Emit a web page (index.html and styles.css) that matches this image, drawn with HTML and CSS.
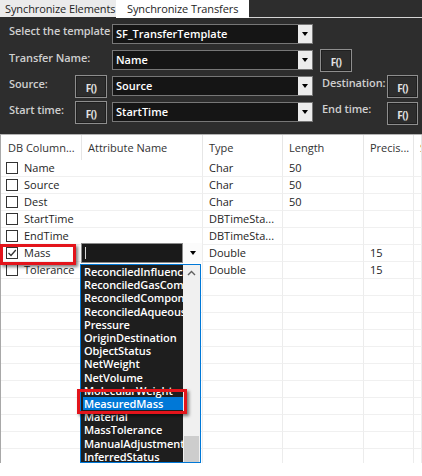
FILE: index.html
```html
<!DOCTYPE html>
<html>
<head>
<meta charset="utf-8">
<link rel="stylesheet" href="styles.css">
</head>
<body>
<div class="app">
  <div class="tabs">
    <div class="tab tab-inactive">Synchronize Elements</div>
    <div class="tab tab-active">Synchronize Transfers</div>
    <div class="tab-fill"></div>
  </div>

  <div class="panel">
    <div class="lbl span2">Select the template</div>
    <div class="combo"><span class="combo-text">SF_TransferTemplate</span><span class="combo-btn"><i class="tri"></i></span></div>
    <div class="blank"></div><div class="blank"></div>

    <div class="lbl span2">Transfer Name:</div>
    <div class="combo"><span class="combo-text">Name</span><span class="combo-btn"><i class="tri"></i></span></div>
    <div class="fbtn">F()</div>
    <div class="blank"></div>

    <div class="lbl">Source:</div>
    <div class="fbtn">F()</div>
    <div class="combo"><span class="combo-text">Source</span><span class="combo-btn"><i class="tri"></i></span></div>
    <div class="lbl lbl-right">Destination:</div>
    <div class="fbtn fbtn-end">F()</div>

    <div class="lbl">Start time:</div>
    <div class="fbtn">F()</div>
    <div class="combo"><span class="combo-text">StartTime</span><span class="combo-btn"><i class="tri"></i></span></div>
    <div class="lbl lbl-right">End time:</div>
    <div class="fbtn fbtn-end fbtn-low">F()</div>
  </div>

  <div class="grid">
    <div class="hdr">
      <div class="hcell">DB Column...</div>
      <div class="hcell">Attribute Name</div>
      <div class="hcell">Type</div>
      <div class="hcell">Length</div>
      <div class="hcell">Precis...</div>
      <div class="hcell">Scale</div>
    </div>
    <div class="row"><div class="cell first"><span class="cb"></span><span class="nm">Name</span></div><div class="cell"></div><div class="cell">Char</div><div class="cell">50</div><div class="cell"></div><div class="cell"></div></div>
    <div class="row"><div class="cell first"><span class="cb"></span><span class="nm">Source</span></div><div class="cell"></div><div class="cell">Char</div><div class="cell">50</div><div class="cell"></div><div class="cell"></div></div>
    <div class="row"><div class="cell first"><span class="cb"></span><span class="nm">Dest</span></div><div class="cell"></div><div class="cell">Char</div><div class="cell">50</div><div class="cell"></div><div class="cell"></div></div>
    <div class="row"><div class="cell first"><span class="cb"></span><span class="nm">StartTime</span></div><div class="cell"></div><div class="cell">DBTimeSta...</div><div class="cell"></div><div class="cell"></div><div class="cell"></div></div>
    <div class="row"><div class="cell first"><span class="cb"></span><span class="nm">EndTime</span></div><div class="cell"></div><div class="cell">DBTimeSta...</div><div class="cell"></div><div class="cell"></div><div class="cell"></div></div>
    <div class="row"><div class="cell first"><span class="cb checked"><svg width="10" height="10" viewBox="0 0 10 10"><polyline points="1.5,5 4,7.5 8.8,2" fill="none" stroke="#333" stroke-width="1.3"/></svg></span><span class="nm">Mass</span></div>
      <div class="cell editor-cell">
        <div class="edit-combo"><span class="edit-text"><i class="caret"></i></span><span class="edit-btn"><i class="tri"></i></span></div>
      </div>
      <div class="cell">Double</div><div class="cell"></div><div class="cell">15</div><div class="cell"></div></div>
    <div class="row"><div class="cell first"><span class="cb"></span><span class="nm">Tolerance</span></div><div class="cell"></div><div class="cell">Double</div><div class="cell"></div><div class="cell">15</div><div class="cell"></div></div>
    <div class="row"><div class="cell first"></div><div class="cell"></div><div class="cell"></div><div class="cell"></div><div class="cell"></div><div class="cell"></div></div>
    <div class="row"><div class="cell first"></div><div class="cell"></div><div class="cell"></div><div class="cell"></div><div class="cell"></div><div class="cell"></div></div>
    <div class="row"><div class="cell first"></div><div class="cell"></div><div class="cell"></div><div class="cell"></div><div class="cell"></div><div class="cell"></div></div>
    <div class="row"><div class="cell first"></div><div class="cell"></div><div class="cell"></div><div class="cell"></div><div class="cell"></div><div class="cell"></div></div>
    <div class="row"><div class="cell first"></div><div class="cell"></div><div class="cell"></div><div class="cell"></div><div class="cell"></div><div class="cell"></div></div>
    <div class="row"><div class="cell first"></div><div class="cell"></div><div class="cell"></div><div class="cell"></div><div class="cell"></div><div class="cell"></div></div>
    <div class="row"><div class="cell first"></div><div class="cell"></div><div class="cell"></div><div class="cell"></div><div class="cell"></div><div class="cell"></div></div>
    <div class="row"><div class="cell first"></div><div class="cell"></div><div class="cell"></div><div class="cell"></div><div class="cell"></div><div class="cell"></div></div>
    <div class="row"><div class="cell first"></div><div class="cell"></div><div class="cell"></div><div class="cell"></div><div class="cell"></div><div class="cell"></div></div>
    <div class="row"><div class="cell first"></div><div class="cell"></div><div class="cell"></div><div class="cell"></div><div class="cell"></div><div class="cell"></div></div>
    <div class="row"><div class="cell first"></div><div class="cell"></div><div class="cell"></div><div class="cell"></div><div class="cell"></div><div class="cell"></div></div>
  </div>

  <div class="dropdown">
    <div class="dd-items">
      <div class="dd-item">ReconciledInfluence</div>
      <div class="dd-item">ReconciledGasComponent</div>
      <div class="dd-item">ReconciledComponent</div>
      <div class="dd-item">ReconciledAqueousComponent</div>
      <div class="dd-item">Pressure</div>
      <div class="dd-item">OriginDestination</div>
      <div class="dd-item">ObjectStatus</div>
      <div class="dd-item">NetWeight</div>
      <div class="dd-item">NetVolume</div>
      <div class="dd-item">MolecularWeight</div>
      <div class="dd-item sel">MeasuredMass</div>
      <div class="dd-item">Material</div>
      <div class="dd-item">MassTolerance</div>
      <div class="dd-item">ManualAdjustment</div>
      <div class="dd-item">InferredStatus</div>
    </div>
    <div class="dd-scroll">
      <div class="dd-up"><svg width="9" height="6" viewBox="0 0 9 6"><polyline points="1,5 4.5,1.5 8,5" fill="none" stroke="#606060" stroke-width="1.4"/></svg></div>
      <div class="dd-thumb"></div>
    </div>
  </div>

  <div class="mark mark-mass"></div>
  <div class="mark mark-item"></div>
</div>
</body>
</html>
```

FILE: styles.css
```css
* { box-sizing: border-box; margin: 0; padding: 0; }
html, body { width: 422px; height: 476px; overflow: hidden; background: #fff; }
body {
  font-family: "Open Sans", "Noto Sans", "DejaVu Sans", sans-serif;
  font-size: 11px;
  color: #1e1e1e;
}
.app { position: relative; width: 422px; height: 476px; }

/* tabs */
.tabs { display: flex; height: 18px; background: #2d2d2d; }
.tab { height: 17px; line-height: 17px; white-space: nowrap; font-size: 11px; letter-spacing: -0.1px; }
.tab-inactive { width: 116px; padding-left: 5px; background: #ebebeb; color: #1e1e1e; }
.tab-active { width: 133px; height: 18px; padding-left: 11px; background: #fff; color: #1e1e1e; }
.tab-fill { flex: 1; height: 18px; border-bottom: 1px solid #d4d4d4; }

/* top panel */
.panel {
  height: 116px;
  background: #2d2d2d;
  padding: 2px 0 0 9px;
  display: grid;
  grid-template-columns: 66px 37px 208px 67px 31px;
  grid-template-rows: 27px 26px 26px 26px;
  align-items: center;
}
.lbl {
  align-self: start;
  margin-top: 3px;
  line-height: 15px;
  color: #cfcfcf;
  font-weight: 600;
  white-space: nowrap;
  letter-spacing: -0.1px;
}
.lbl-right { padding-left: 2px; margin-top: 2px; }
.span2 { grid-column: 1 / 3; }
.combo {
  width: 201px;
  height: 20px;
  display: flex;
  border: 1px solid #777;
  background: #151515;
}
.combo-text {
  flex: 1;
  padding-left: 3px;
  line-height: 18px;
  color: #fff;
  font-weight: 600;
  white-space: nowrap;
  overflow: hidden;
}
.combo-btn {
  width: 14px;
  background: #ececec;
  display: flex;
  align-items: center;
  justify-content: center;
}
.tri {
  display: block;
  width: 0;
  height: 0;
  border-left: 3.5px solid transparent;
  border-right: 3.5px solid transparent;
  border-top: 4px solid #000;
}
.fbtn {
  width: 32px;
  height: 23px;
  border: 1px solid #8e8e8e;
  box-shadow: inset 0 0 0 1px #1f1f1f;
  color: #e4e4e4;
  font-weight: 700;
  font-size: 10px;
  text-align: center;
  padding-top: 5px;
  letter-spacing: -0.6px;
}
.fbtn-end { width: 31px; }
.fbtn-low { margin-top: 3px; }

/* data grid */
.grid {
  height: 329px;
  overflow: hidden;
  border-top: 1px solid #b3b3b3;
  border-left: 1px solid #a8a8a8;
}
.hdr, .row {
  display: grid;
  grid-template-columns: 81px 121px 80px 81px 50px 1fr;
}
.hcell {
  height: 25px;
  line-height: 25px;
  padding-left: 6px;
  border-right: 1px solid #e6e6e6;
  color: #333;
  white-space: nowrap;
  overflow: hidden;
}
.hcell:first-child { padding-left: 7px; }
.cell {
  height: 17px;
  line-height: 16px;
  padding-left: 6px;
  border-bottom: 1px solid #f0f0f0;
  border-right: 1px solid #ececec;
  white-space: nowrap;
  overflow: hidden;
  color: #1e1e1e;
}
.cell.first { border-right: none; padding-left: 5px; display: flex; align-items: center; }
.cb {
  width: 12px;
  height: 12px;
  border: 1px solid #333;
  background: #fff;
  display: flex;
  align-items: center;
  justify-content: center;
  flex: none;
}
.nm { margin-left: 6px; }
.editor-cell { position: relative; overflow: visible; }
.edit-combo {
  position: absolute;
  left: -1px;
  top: -2px;
  width: 121px;
  height: 20px;
  display: flex;
  z-index: 2;
}
.edit-text {
  flex: 1;
  background: #1a1a1a;
  border: 1px solid #8a8a8a;
  position: relative;
}
.caret {
  position: absolute;
  left: 3px;
  top: 3px;
  width: 1px;
  height: 12px;
  background: #d8d8d8;
}
.edit-btn {
  width: 19px;
  background: #fbfbfb;
  display: flex;
  align-items: center;
  justify-content: center;
}

/* dropdown popup */
.dropdown {
  position: absolute;
  left: 80px;
  top: 264px;
  width: 121px;
  height: 199px;
  border: 1px solid #0078d7;
  background: #1e1e1e;
  display: flex;
  z-index: 3;
}
.dd-items {
  flex: 1;
  overflow: hidden;
  padding-left: 2px;
  color: #fff;
  font-weight: 600;
  line-height: 13.2px;
  letter-spacing: -0.1px;
}
.dd-item { white-space: nowrap; padding-left: 1px; }
.dd-item.sel { background: #0078d7; }
.dd-scroll {
  width: 17px;
  background: #f0f0f0;
  display: flex;
  flex-direction: column;
}
.dd-up { height: 16px; display: flex; align-items: center; justify-content: center; }
.dd-thumb { margin: auto 1px 0; height: 26px; background: #cdcdcd; }

/* red annotation marks */
.mark {
  position: absolute;
  border: 3px solid #e3141b;
  box-shadow: 2px 2px 3px rgba(0,0,0,0.5);
  z-index: 4;
}
.mark-mass { left: 0; top: 244px; width: 76px; height: 21px; }
.mark-item { left: 77px; top: 389px; width: 110px; height: 25px; }
```
